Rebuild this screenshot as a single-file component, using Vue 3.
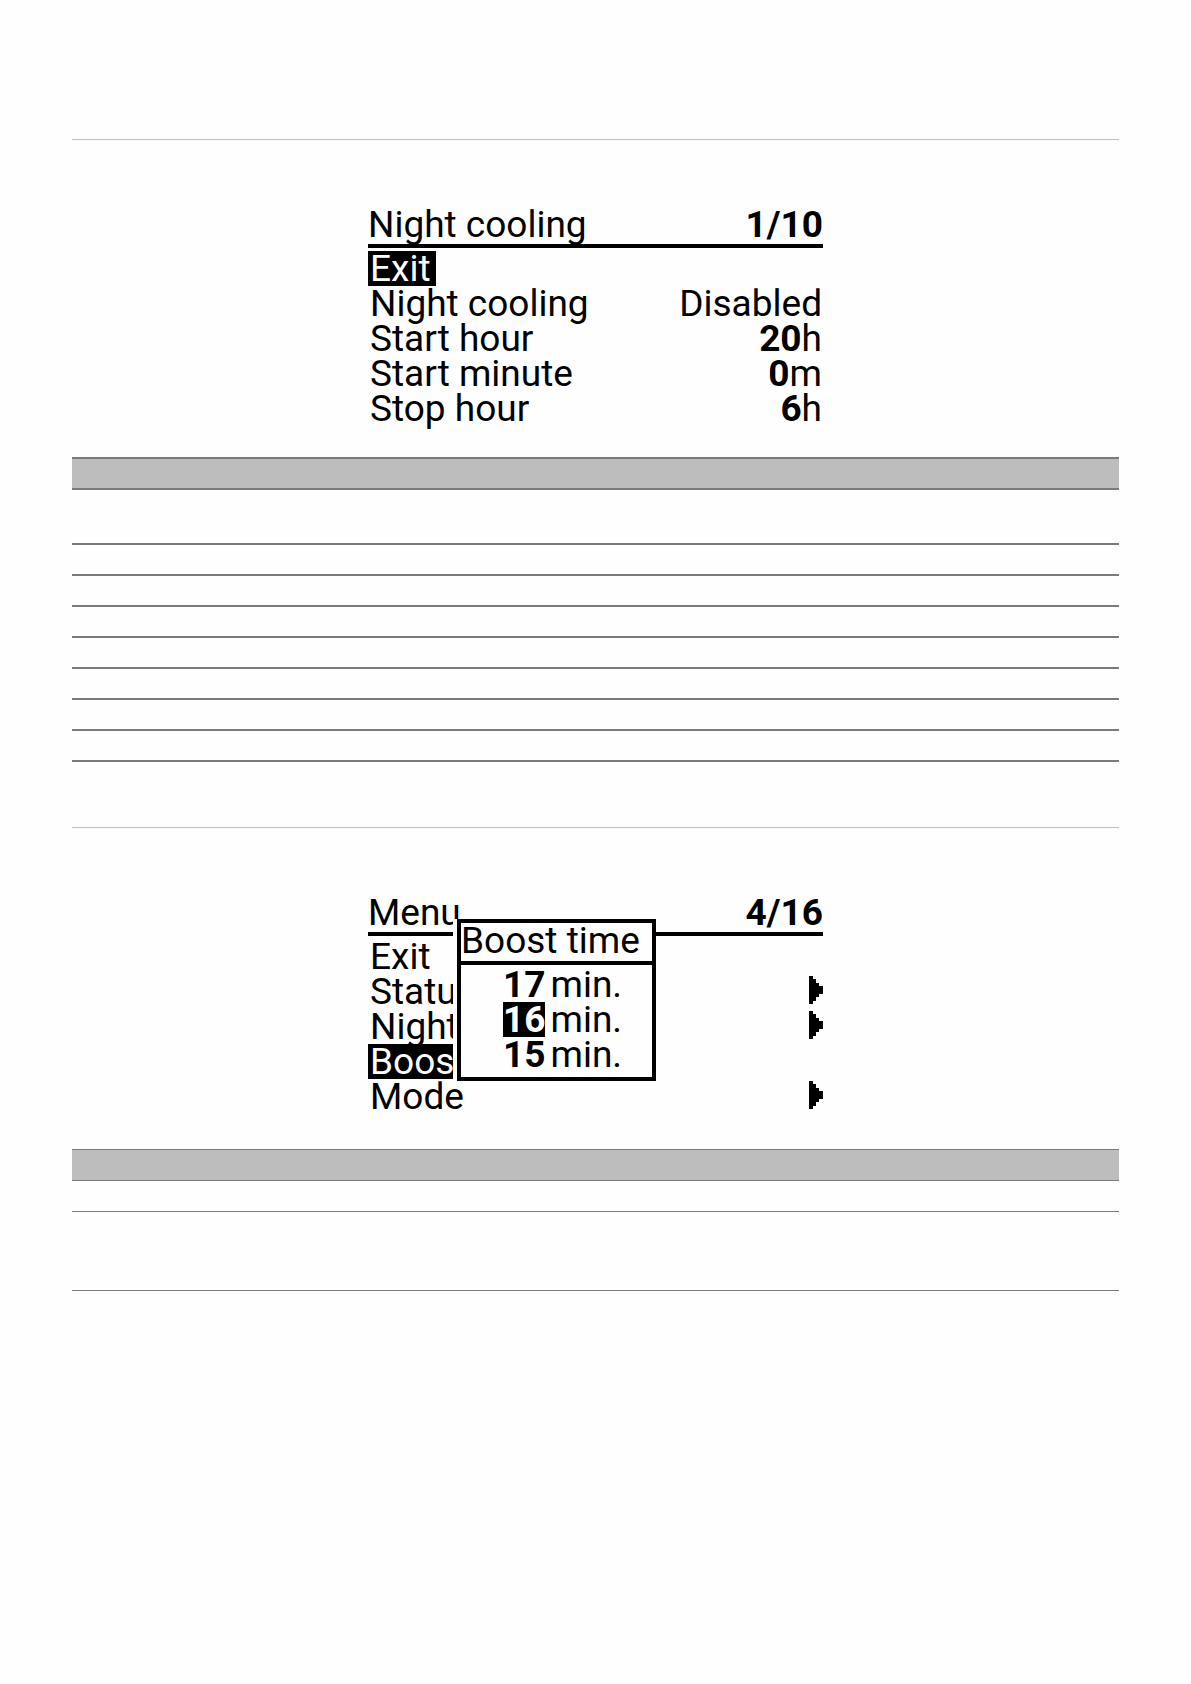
<script setup>
import { ref } from 'vue';

const ajustes = [
    { label: 'Exit' },
    { label: 'Night cooling', text: 'Disabled' },
    { label: 'Start hour', num: 20, text: 'h' },
    { label: 'Start minute', num: 0, text: 'm' },
    { label: 'Stop hour', num: 6, text: 'h' }
];

const menu = [
    { label: 'Exit' },
    { label: 'Statu', arrow: true },
    { label: 'Night', arrow: true },
    { label: 'Boos' },
    { label: 'Mode', arrow: true }
];

const minutes = [17, 16, 15];

const selectedSetting = ref(0);
const selectedMenu = ref(3);
const selectedMinutes = ref(16);
</script>

<template>
    <main class="page">
        <section class="block">
            <div class="screen">
                <header class="screen-title">
                    <span>Night cooling</span>
                    <strong>1/10</strong>
                </header>
                <ul class="rows">
                    <li v-for="(item, i) in ajustes" :key="item.label">
                        <button class="row" type="button" @click="selectedSetting = i">
                            <span class="label" :class="{ selected: selectedSetting === i }">{{ item.label }}</span>
                            <span class="value"><b v-if="item.num !== undefined">{{ item.num }}</b>{{ item.text }}</span>
                        </button>
                    </li>
                </ul>
            </div>

            <table class="settings">
                <thead>
                    <tr><th></th><th></th></tr>
                </thead>
                <tbody>
                    <tr class="two-lines"><td></td><td></td></tr>
                    <tr v-for="n in 7" :key="n"><td></td><td></td></tr>
                </tbody>
            </table>
        </section>

        <section class="block">
            <div class="screen">
                <header class="screen-title">
                    <span>Menu</span>
                    <strong>4/16</strong>
                </header>
                <ul class="rows">
                    <li v-for="(item, i) in menu" :key="item.label">
                        <button class="row" type="button" @click="selectedMenu = i">
                            <span class="label" :class="{ selected: selectedMenu === i }">{{ item.label }}</span>
                            <svg v-if="item.arrow" class="arrow" viewBox="0 0 14 28" shape-rendering="crispEdges">
                                <path d="M0 0H4V3H7V7H10V10H14V18H10V21H7V25H4V28H0Z" />
                            </svg>
                        </button>
                    </li>
                </ul>

                <div class="popup">
                    <div class="popup-title">Boost time</div>
                    <ul class="options">
                        <li v-for="n in minutes" :key="n">
                            <button class="option" type="button" @click="selectedMinutes = n">
                                <b :class="{ selected: selectedMinutes === n }">{{ n }}</b>
                                <span>min.</span>
                            </button>
                        </li>
                    </ul>
                </div>
            </div>

            <table class="settings thin">
                <thead>
                    <tr><th></th><th></th></tr>
                </thead>
                <tbody>
                    <tr><td></td><td></td></tr>
                    <tr class="three-lines"><td></td><td></td></tr>
                </tbody>
            </table>
        </section>
    </main>
</template>

<style>
body {
    margin: 0;
    background-color: #fefefe;
}
</style>

<style scoped>
.page {
    padding: 139px 72px 0;
    color: black;
    font-family: Roboto, "Liberation Sans", sans-serif;
    font-size: 37px;
    line-height: 35px;
}

.block {
    border-top: 1px solid #bebebe;
    padding-top: 67px;
    margin-bottom: 65px;
}

.screen {
    position: relative;
    width: 100%;
    max-width: 455px;
    margin: 0 auto;
    white-space: nowrap;
}

.screen-title {
    display: flex;
    justify-content: space-between;
    padding-bottom: 2px;
    border-bottom: 4px solid black;
    margin-bottom: 3px;
}

ul {
    list-style: none;
    margin: 0;
    padding: 0;
}

button {
    border: none;
    padding: 0;
    background: none;
    color: inherit;
    font: inherit;
    cursor: pointer;
}

.row {
    display: flex;
    justify-content: space-between;
    align-items: flex-start;
    width: 100%;
    height: 35px;
}

.label {
    padding: 0 5px 0 2px;
}

.value {
    padding-right: 1px;
}

.selected {
    background-color: black;
    color: white;
}

.arrow {
    width: 14px;
    height: 28px;
    margin-top: 2px;
}

.popup {
    position: absolute;
    top: 24px;
    left: 89px;
    width: 191px;
    border: 4px solid black;
    background-color: #fefefe;
    box-shadow: -4px 0 0 #fefefe;
}

.popup-title {
    padding-bottom: 3px;
    border-bottom: 4px solid black;
}

.options {
    padding: 2px 0 5px 42px;
}

.option {
    display: flex;
    gap: 5px;
    height: 35px;
}

.settings {
    width: 100%;
    margin-top: 31px;
    border-collapse: separate;
    border-spacing: 0;
}

.settings th,
.settings td {
    box-sizing: border-box;
    height: 31px;
    padding: 0;
    border-bottom: 2px solid #7a7a7a;
}

.settings th {
    height: 33px;
    border-top: 2px solid #7a7a7a;
    background-color: #bdbdbd;
}

.settings .two-lines td {
    height: 55px;
}

.thin {
    margin-top: 35px;
}

.thin th,
.thin td {
    border-bottom-width: 1px;
}

.thin th {
    height: 32px;
    border-top-width: 1px;
}

.settings.thin .three-lines td {
    height: 79px;
}
</style>
